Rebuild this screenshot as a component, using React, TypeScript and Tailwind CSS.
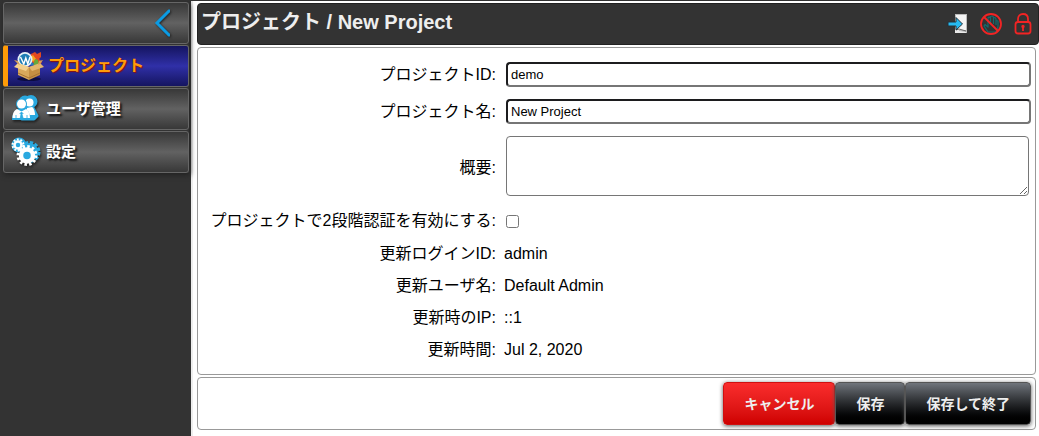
import React, { useState } from 'react';
import clsx from 'clsx';

function BoxIcon() {
  return (
    <svg className="h-8 w-8 shrink-0" viewBox="0 0 32 32">
      <ellipse cx="16" cy="29" rx="12" ry="2" fill="#0c0c40" />
      <path d="M18 4l4-2 2 2 4-2v5l-2 2 3 3-3 4-8-4z" fill="#e2481f" />
      <path d="M17 7l3-2 3 4-3 3z" fill="#f7a51c" />
      <path d="M22 9l3 1 1 5h-6z" fill="#67a93a" />
      <path d="M18 11l3 3-2 2-3-2z" fill="#2d75bd" />
      <circle cx="12" cy="9.500" r="7.500" fill="#e8f1f6" />
      <circle cx="12" cy="9.500" r="5.700" fill="#1f7db4" />
      <path d="M7.500 7l3.300 7 2-6 2 6 2.200-7" fill="none" stroke="#fff" strokeWidth="1.400" />
      <path d="M5 14l11 3v13L5 25z" fill="#d9a85b" />
      <path d="M27 14l-11 3v13l11-5z" fill="#c48f43" />
      <path d="M5 13L1 17l12 4 3-4z" fill="#f2cf8d" />
      <path d="M27 13l4 4-12 4-3-4z" fill="#e3b66d" />
      <path d="M5 14L1 10l4 1 2 4zM27 14l3-4-4 1-1 4z" fill="#d5a158" />
      <path d="M5 23l11 5 11-5" fill="none" stroke="#a87432" strokeWidth="1" />
    </svg>
  );
}

function UsersIcon() {
  return (
    <svg className="h-8 w-8 shrink-0 drop-shadow-[1px_2px_1px_#222]" viewBox="0 0 32 32">
      <g fill="#2aa9e0" stroke="#2aa9e0" strokeWidth="3" strokeLinejoin="round">
        <circle cx="15" cy="9" r="5" />
        <circle cx="21" cy="8.500" r="5" />
        <path d="M12 26l4-11h7l4 8-3 3z" />
      </g>
      <g fill="#fff">
        <circle cx="19.500" cy="9.500" r="4" />
        <path d="M17 15l5-1c2 1 3 5 3 8h-8z" />
      </g>
      <circle cx="11.500" cy="11" r="5.500" fill="#2aa9e0" />
      <path d="M2 27c0-6 3-10 6-11h7c4 1 5 6 5 11z" fill="#2aa9e0" />
      <circle cx="11.500" cy="11" r="4.500" fill="#fff" />
      <path d="M2.500 25c0-5 2-8 4.500-9l4.500 2.500L16 16c2.500 1 4 5 4 9z" fill="#fff" />
      <path d="M11.500 19l-1.500 1.500 1 1-1 5h3.500l-1.500-5 1-1zM6 22v4M17 22v4" fill="#2aa9e0" stroke="#2aa9e0" strokeWidth="0.800" />
    </svg>
  );
}

function GearsIcon() {
  return (
    <svg className="h-8 w-8 shrink-0 drop-shadow-[1px_2px_1px_#222]" viewBox="0 0 32 32">
      <circle cx="19.500" cy="16" r="9" fill="#2aa9e0" />
      <circle cx="19.500" cy="16" r="9" fill="none" stroke="#2aa9e0" strokeWidth="4" strokeDasharray="3.200 1.512" />
      <circle cx="9" cy="9" r="7.500" fill="#2aa9e0" />
      <circle cx="17" cy="19.500" r="6" fill="#2aa9e0" stroke="#fff" strokeWidth="4.500" />
      <circle cx="17" cy="19.500" r="9" fill="none" stroke="#fff" strokeWidth="3" strokeDasharray="2.500 2.212" />
      <circle cx="8" cy="9" r="3.500" fill="none" stroke="#fff" strokeWidth="2.500" />
      <circle cx="8" cy="9" r="5.500" fill="none" stroke="#fff" strokeWidth="2" strokeDasharray="1.800 1.656" />
    </svg>
  );
}

function LoginIcon() {
  return (
    <svg className="h-6 w-6" viewBox="0 0 24 24">
      <path d="M8 2h12v19H8z" fill="#bbb" />
      <path d="M9 3h10v15H9z" fill="#f4f4f4" />
      <path d="M8 17l4-1v3l7 1v1H8z" fill="#e8e8e8" />
      <path d="M9 18l3-1 7 2" fill="none" stroke="#666" strokeWidth="1" />
      <path d="M1 10h8V5.500l6.500 6.500L9 18v-4H1z" fill="#26b9f0" stroke="#243038" strokeWidth="1" />
    </svg>
  );
}

function NoHandIcon() {
  return (
    <svg className="h-6 w-6" viewBox="0 0 24 24" fill="none">
      <path
        d="M9 20L5 14l1-1.500 3 2.500V6l1-1 1.500 1V4.500L13 4l1.500 1v1l1.500-.5 1 1.500v1.500l2 .5v6l-2 5zM11.500 6v6M14.500 6v6M17 8v5"
        stroke="#146a6e"
        strokeWidth="1.200"
        strokeLinejoin="round"
      />
      <circle cx="12" cy="12" r="10" stroke="#f22424" strokeWidth="1.800" />
      <path d="M5 5l14 14" stroke="#f22424" strokeWidth="1.800" />
    </svg>
  );
}

function LockIcon() {
  return (
    <svg className="h-6 w-6" viewBox="0 0 24 24" fill="none" stroke="#f22424" strokeWidth="1.800">
      <path d="M7 10V7c0-3 2-5 5-5s5 2 5 5v3" />
      <rect x="4.500" y="10" width="15" height="11.500" rx="2.500" />
      <path d="M12 15v4" />
      <circle cx="12" cy="14.500" r="0.800" />
    </svg>
  );
}

const menuItems = [
  { label: 'プロジェクト', icon: <BoxIcon />, active: true },
  { label: 'ユーザ管理', icon: <UsersIcon />, active: false },
  { label: '設定', icon: <GearsIcon />, active: false },
];

const infoRows = [
  { label: '更新ログインID:', value: 'admin' },
  { label: '更新ユーザ名:', value: 'Default Admin' },
  { label: '更新時のIP:', value: '::1' },
  { label: '更新時間:', value: 'Jul 2, 2020' },
];

const rowClass = 'grid grid-cols-[298px_1fr] items-center gap-2';
const inputClass =
  'mx-[2px] h-[25px] rounded border-2 border-t-[#1c1c1e] border-l-[#1c1c1e] border-r-[#767676] border-b-[#767676] bg-white px-[3px] text-[13px] text-black outline-none';
const buttonClass = 'h-[43px] rounded border px-5 text-sm font-bold text-[#eee] shadow-[0_1px_4px_#555]';
const darkButtonClass = 'border-[#555] bg-linear-to-b from-[#70757c] to-black';

function App() {
  const [projectId, setProjectId] = useState('demo');
  const [projectName, setProjectName] = useState('New Project');
  const [summary, setSummary] = useState('');
  const [twoStep, setTwoStep] = useState(false);

  return (
    <div className="flex min-h-screen border-t border-[#333] bg-white font-['Liberation_Sans','Noto_Sans_CJK_JP',sans-serif] text-base text-black">
      <aside className="w-[191px] shrink-0 bg-[#333] pt-px pr-[2px] pl-[3px] shadow-[2px_0_0_#eee]">
        <nav className="flex flex-col gap-px shadow-[1px_2px_5px_#222]">
          <button
            type="button"
            aria-label="メニューを閉じる"
            className="flex h-[42px] items-center justify-end rounded-[3px] border border-[#666] bg-linear-to-b from-[#383838] via-[#626262] to-[#383838] pr-4"
          >
            <svg className="h-7 w-5 drop-shadow-[1px_1px_1px_#222]" viewBox="0 0 20 28" fill="none">
              <path d="M18 2h-1L5 14l12 12h1" stroke="#0b9be3" strokeWidth="3" />
            </svg>
          </button>
          {menuItems.map((item) => (
            <a
              key={item.label}
              href="#"
              className={clsx(
                'flex h-[42px] items-center rounded-[3px] border border-[#666] bg-linear-to-b font-bold',
                item.active
                  ? 'gap-[3px] border-l-[5px] border-l-[#ff9c08] from-[#151560] via-[#3030a8] to-[#151560] pl-[5px] text-base text-[#ff9c08] [text-shadow:1px_1px_1px_#811]'
                  : 'gap-[4px] from-[#383838] via-[#626262] to-[#383838] pl-[6px] text-[15px] text-white [text-shadow:2px_2px_2px_#111]'
              )}
            >
              {item.icon}
              {item.label}
            </a>
          ))}
        </nav>
      </aside>

      <main className="flex min-w-0 flex-1 flex-col gap-[2px] pt-[2px] pl-[6px]">
        <header className="flex h-[42px] items-center justify-between rounded border border-[#222] bg-[#333] px-[3px]">
          <h1 className="pb-1 text-xl font-bold text-[#eee]">プロジェクト / New Project</h1>
          <div className="flex gap-2">
            <button type="button" aria-label="ログイン"><LoginIcon /></button>
            <button type="button" aria-label="無効"><NoHandIcon /></button>
            <button type="button" aria-label="ロック"><LockIcon /></button>
          </div>
        </header>

        <form className="mr-[3px] flex flex-col gap-[2px]" onSubmit={(e) => e.preventDefault()}>
          <div className="rounded border border-[#999] pt-2 pr-[2px] pb-[9px]">
            <div className={clsx(rowClass, 'h-[37px]')}>
              <label htmlFor="project-id" className="text-right">プロジェクトID:</label>
              <input
                id="project-id"
                className={inputClass}
                value={projectId}
                onChange={(e) => setProjectId(e.target.value)}
              />
            </div>
            <div className={clsx(rowClass, 'h-[37px]')}>
              <label htmlFor="project-name" className="text-right">プロジェクト名:</label>
              <input
                id="project-name"
                className={inputClass}
                value={projectName}
                onChange={(e) => setProjectName(e.target.value)}
              />
            </div>
            <div className={clsx(rowClass, 'h-[75px]')}>
              <label htmlFor="summary" className="text-right">概要:</label>
              <textarea
                id="summary"
                className="mr-1 mb-[3px] ml-[2px] h-[60px] rounded border border-[#767676] p-[2px] text-[13px]"
                value={summary}
                onChange={(e) => setSummary(e.target.value)}
              />
            </div>
            <div className={clsx(rowClass, 'h-8')}>
              <label htmlFor="two-step" className="text-right">プロジェクトで2段階認証を有効にする:</label>
              <input
                id="two-step"
                type="checkbox"
                className="ml-[2px] h-[13px] w-[13px]"
                checked={twoStep}
                onChange={(e) => setTwoStep(e.target.checked)}
              />
            </div>
            {infoRows.map((row) => (
              <div key={row.label} className={clsx(rowClass, 'h-8 pt-px')}>
                <span className="text-right">{row.label}</span>
                <span>{row.value}</span>
              </div>
            ))}
          </div>

          <div className="flex justify-end rounded border border-[#999] p-1">
            <button type="button" className={clsx(buttonClass, 'border-[#d01010] bg-linear-to-b from-[#fa2c2c] to-[#cf0000]')}>
              キャンセル
            </button>
            <button type="submit" className={clsx(buttonClass, darkButtonClass)}>保存</button>
            <button type="submit" className={clsx(buttonClass, darkButtonClass)}>保存して終了</button>
          </div>
        </form>
      </main>
    </div>
  );
}

export default App;
